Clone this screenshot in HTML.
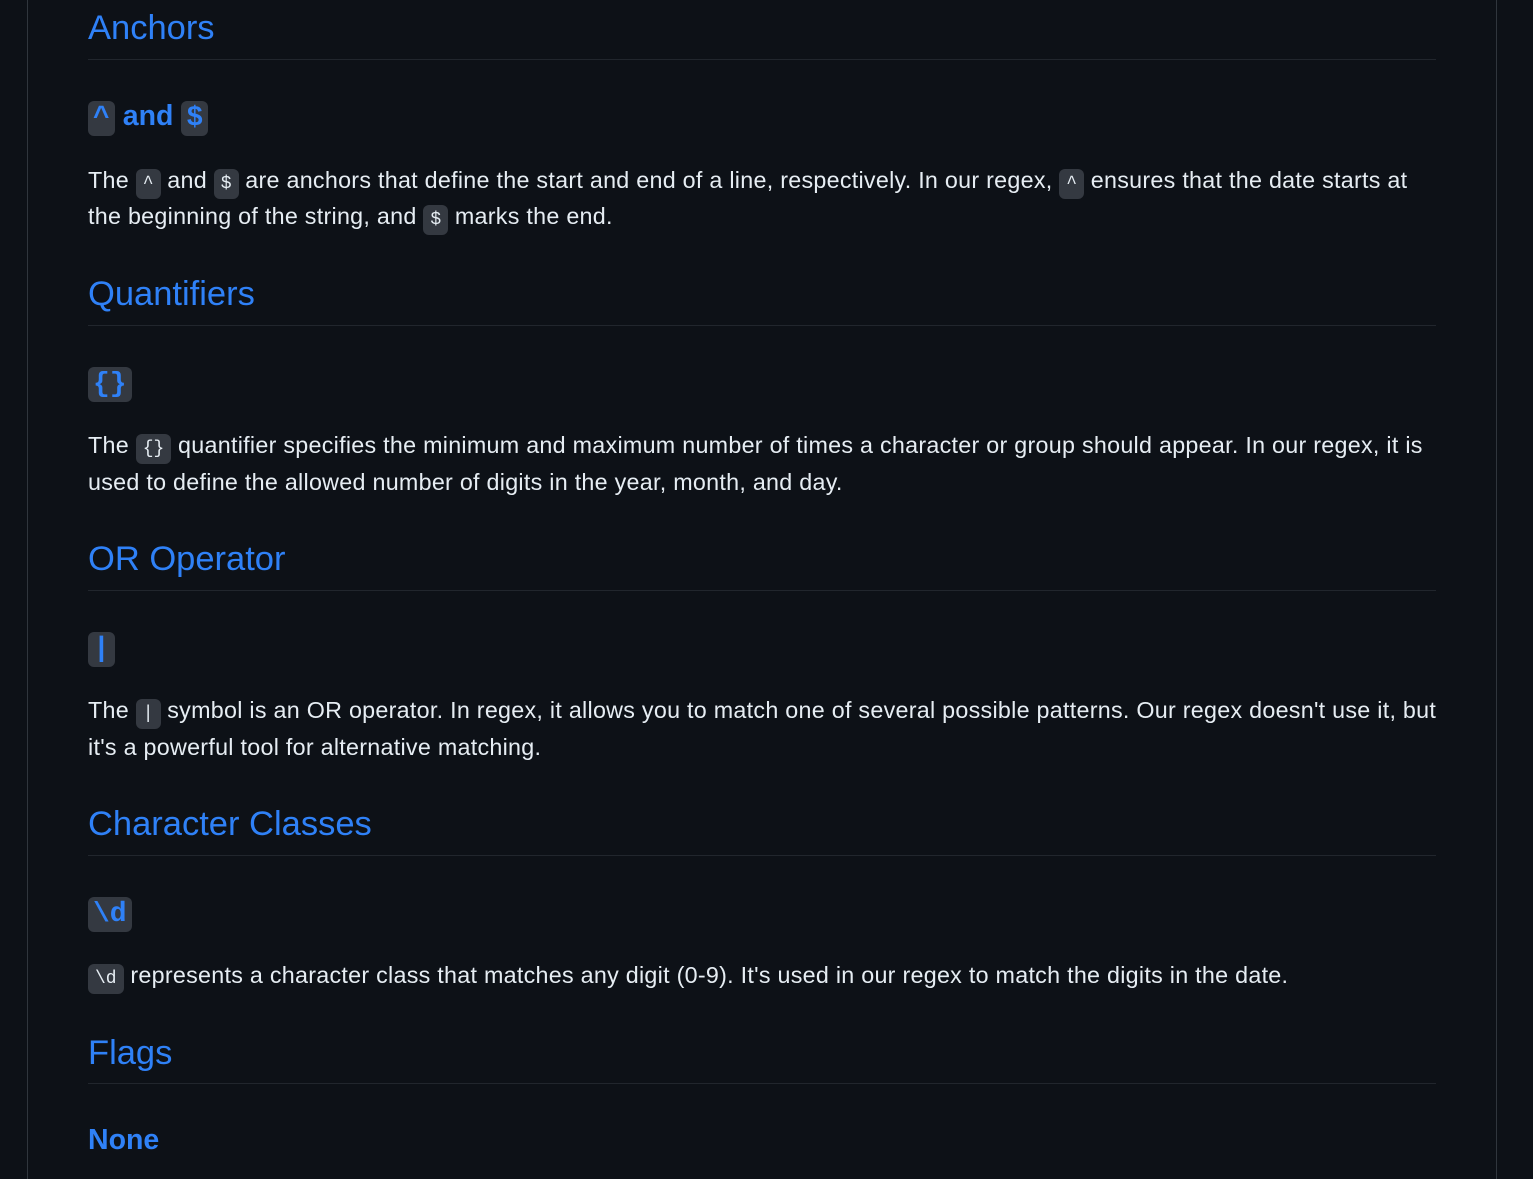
<!DOCTYPE html>
<html><head><style>
html,body{margin:0;padding:0;background:#0d1117;}
body{width:1533px;height:1179px;position:relative;overflow:hidden;font-family:"Liberation Sans",sans-serif;color:#e6edf3;}
.frame{position:absolute;left:27px;top:0;width:1468px;height:1179px;border-left:1px solid #30363d;border-right:1px solid #30363d;}
.h2{position:absolute;left:88px;width:1348px;font-size:34.5px;line-height:42px;color:#2f81f7;font-weight:500;white-space:nowrap;}
.rule{position:absolute;left:88px;width:1348px;height:1px;background:#21262d;}
.h3{position:absolute;left:88px;font-size:28.5px;line-height:38px;color:#2f81f7;font-weight:600;white-space:nowrap;}
.p{position:absolute;left:88px;font-size:23.3px;line-height:36px;white-space:nowrap;letter-spacing:0.27px;}
code{font-family:"Liberation Mono",monospace;background:#343941;border-radius:6px;padding:5px 7px;font-size:18px;letter-spacing:0;}
.h3 code{font-size:28px;padding:2px 5px;font-weight:700;}
</style></head><body>
<div class="frame"></div>

<div class="h2" style="top:7px">Anchors</div>
<div class="rule" style="top:59px"></div>
<div class="h3" style="top:97px"><code>^</code> and <code>$</code></div>
<div class="p" style="top:162px">The <code>^</code> and <code>$</code> are anchors that define the start and end of a line, respectively. In our regex, <code>^</code> ensures that the date starts at</div>
<div class="p" style="top:198px">the beginning of the string, and <code>$</code> marks the end.</div>

<div class="h2" style="top:273px">Quantifiers</div>
<div class="rule" style="top:325px"></div>
<div class="h3" style="top:363px"><code>{}</code></div>
<div class="p" style="top:427px">The <code>{}</code> quantifier specifies the minimum and maximum number of times a character or group should appear. In our regex, it is</div>
<div class="p" style="top:464px">used to define the allowed number of digits in the year, month, and day.</div>

<div class="h2" style="top:538px">OR Operator</div>
<div class="rule" style="top:590px"></div>
<div class="h3" style="top:628px"><code>|</code></div>
<div class="p" style="top:692px">The <code>|</code> symbol is an OR operator. In regex, it allows you to match one of several possible patterns. Our regex doesn't use it, but</div>
<div class="p" style="top:729px">it's a powerful tool for alternative matching.</div>

<div class="h2" style="top:803px">Character Classes</div>
<div class="rule" style="top:855px"></div>
<div class="h3" style="top:893px"><code>\d</code></div>
<div class="p" style="top:957px"><code>\d</code> represents a character class that matches any digit (0-9). It's used in our regex to match the digits in the date.</div>

<div class="h2" style="top:1032px">Flags</div>
<div class="rule" style="top:1083px"></div>
<div class="h3" style="top:1121px">None</div>
</body></html>
